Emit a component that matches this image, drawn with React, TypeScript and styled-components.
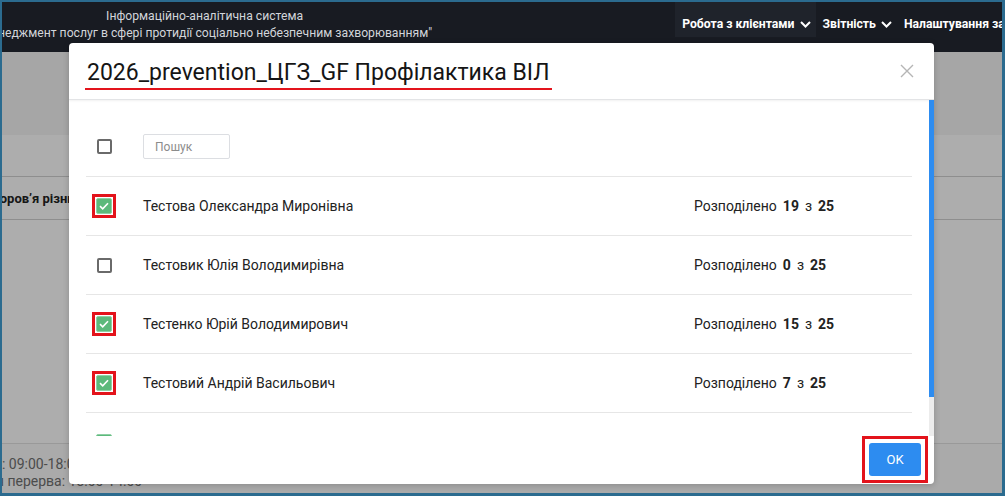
import * as React from 'react'
import styled, { createGlobalStyle, css } from 'styled-components'

const GlobalStyle = createGlobalStyle`
  html, body {
    margin: 0;
    padding: 0;
    background: #ffffff;
  }
  body {
    font-family: Roboto, 'Noto Sans', Arial, sans-serif;
  }
  * {
    box-sizing: border-box;
  }
`

type Specialist = {
  id: number
  name: string
  assigned: number
  total: number
  checked: boolean
  marked: boolean
}

const specialists: Specialist[] = [
  { id: 1, name: 'Тестова Олександра Миронівна', assigned: 19, total: 25, checked: true, marked: true },
  { id: 2, name: 'Тестовик Юлія Володимирівна', assigned: 0, total: 25, checked: false, marked: false },
  { id: 3, name: 'Тестенко Юрій Володимирович', assigned: 15, total: 25, checked: true, marked: true },
  { id: 4, name: 'Тестовий Андрій Васильович', assigned: 7, total: 25, checked: true, marked: true },
  { id: 5, name: 'Тестовський Петро Іванович', assigned: 3, total: 25, checked: true, marked: false },
]

const ChevronDown = () => (
  <svg width="11" height="7" viewBox="0 0 11 7" fill="none">
    <path d="M1 1l4.5 4.5L10 1" stroke="currentColor" strokeWidth="2" />
  </svg>
)

const CloseIcon = () => (
  <svg width="14" height="14" viewBox="0 0 14 14" fill="none">
    <path d="M1 1l12 12M13 1L1 13" stroke="currentColor" strokeWidth="1.4" />
  </svg>
)

const CheckMark = () => (
  <svg width="10" height="8" viewBox="0 0 10 8" fill="none">
    <path d="M1 4.2l2.7 2.6L9 1.2" stroke="#ffffff" strokeWidth="1.6" />
  </svg>
)

export default function App() {
  const [items, setItems] = React.useState(specialists)
  const [query, setQuery] = React.useState('')

  const toggle = (id: number) =>
    setItems((list) => list.map((it) => (it.id === id ? { ...it, checked: !it.checked } : it)))

  const renderBox = (it: Specialist) => {
    const box = (
      <Checkbox $checked={it.checked} onClick={() => toggle(it.id)}>
        {it.checked && <CheckMark />}
      </Checkbox>
    )
    return it.marked ? <Highlight>{box}</Highlight> : box
  }

  return (
    <Screen>
      <GlobalStyle />
      <TopBar>
        <Brand>
          <div>Інформаційно-аналітична система</div>
          <div>"Менеджмент послуг в сфері протидії соціально небезпечним захворюванням"</div>
        </Brand>
        <Nav>
          <NavItem $active>
            Робота з клієнтами <ChevronDown />
          </NavItem>
          <NavItem>
            Звітність <ChevronDown />
          </NavItem>
          <NavItem>
            Налаштування запитів <ChevronDown />
          </NavItem>
        </Nav>
      </TopBar>

      <Page>
        <FilterBand />
        <TableGap />
        <TableRow>
          <RowLabel>Охорона здоров’я різних груп населення</RowLabel>
        </TableRow>
        <PageFill />
        <PageFooter>
          <FooterLine>Графік: 09:00-18:00</FooterLine>
          <FooterLine>Обідня перерва: 13:00-14:00</FooterLine>
        </PageFooter>
        <Backdrop />
      </Page>

      <Modal>
        <ModalHeader>
          <ModalTitle>2026_prevention_ЦГЗ_GF Профілактика ВІЛ</ModalTitle>
          <CloseButton aria-label="close">
            <CloseIcon />
          </CloseButton>
        </ModalHeader>

        <ModalBody>
          <ListViewport>
            <ListHead>
              <CheckCell>
                <Checkbox $checked={false} />
              </CheckCell>
              <SearchInput
                placeholder="Пошук"
                value={query}
                onChange={(e) => setQuery(e.target.value)}
              />
            </ListHead>
            {items.map((it) => (
              <ListRow key={it.id}>
                <CheckCell>{renderBox(it)}</CheckCell>
                <Name>{it.name}</Name>
                <Quota>
                  <span>Розподілено</span>
                  <b>{it.assigned}</b>
                  <span>з</span>
                  <b>{it.total}</b>
                </Quota>
              </ListRow>
            ))}
          </ListViewport>
          <ScrollTrack>
            <ScrollThumb />
          </ScrollTrack>
        </ModalBody>

        <ModalFooter>
          <Highlight $wide>
            <OkButton>OK</OkButton>
          </Highlight>
        </ModalFooter>
      </Modal>
    </Screen>
  )
}

const Screen = styled.div`
  position: relative;
  width: 1005px;
  height: 496px;
  overflow: hidden;
  border-style: solid;
  border-color: #2b6b8f;
  border-width: 2px 3px 3px 2px;
  display: flex;
  flex-direction: column;
`

const TopBar = styled.header`
  display: flex;
  flex: 0 0 50px;
  background: #181b22;
  overflow: hidden;
  white-space: nowrap;
`

const Brand = styled.div`
  flex: 0 0 450px;
  margin-left: -25px;
  padding-top: 6px;
  text-align: center;
  color: #d2d5da;
  font-size: 12.2px;
  line-height: 17px;
`

const Nav = styled.nav`
  display: flex;
  margin-left: 243px;
  height: 35px;
`

const NavItem = styled.div<{ $active?: boolean }>`
  display: flex;
  align-items: flex-start;
  gap: 5px;
  padding: 14px 5px 0 7px;
  color: #ffffff;
  font-weight: 700;
  font-size: 12.2px;
  line-height: 16px;
  ${(p) =>
    p.$active &&
    css`
      background: #1f232b;
    `}

  & > svg {
    margin-top: 5px;
  }
`

const Page = styled.main`
  position: relative;
  flex: 1;
  display: flex;
  flex-direction: column;
  background: #ffffff;
`

const FilterBand = styled.div`
  flex: 0 0 83px;
  background: #f5f5f5;
`

const TableGap = styled.div`
  flex: 0 0 42px;
  border-bottom: 1px solid #d2d2d2;
`

const TableRow = styled.div`
  flex: 0 0 43px;
  display: flex;
  align-items: center;
  border-bottom: 1px solid #d2d2d2;
  overflow: hidden;
`

const RowLabel = styled.div`
  margin-left: -72px;
  white-space: nowrap;
  font-weight: 700;
  font-size: 13px;
  color: #222;
`

const PageFill = styled.div`
  flex: 1;
`

const PageFooter = styled.footer`
  flex: 0 0 50px;
  border-top: 1px solid #e2e2e2;
  background: #fbfbfb;
  padding-top: 12px;
  overflow: hidden;
`

const FooterLine = styled.div`
  margin-left: -43px;
  white-space: nowrap;
  font-size: 14px;
  line-height: 17px;
  color: #707070;
`

const Backdrop = styled.div`
  position: absolute;
  inset: 0;
  background: rgba(0, 0, 0, 0.32);
`

const Modal = styled.section`
  position: absolute;
  left: 67px;
  top: 41px;
  width: 865px;
  height: 441px;
  background: #ffffff;
  border-radius: 4px;
  box-shadow: 0 1px 6px rgba(0, 0, 0, 0.2);
  display: flex;
  flex-direction: column;
  overflow: hidden;
`

const ModalHeader = styled.div`
  flex: 0 0 57px;
  display: flex;
  align-items: center;
  padding: 0 20px 0 16px;
  border-bottom: 1px solid #e3e4e6;
  box-shadow: 0 1px 2px rgba(0, 0, 0, 0.06);
`

const ModalTitle = styled.h2`
  margin: 6px 0 0;
  padding: 0 2px 1px;
  font-size: 23px;
  font-weight: 400;
  line-height: 28px;
  color: #151515;
  border-bottom: 2px solid #e3141d;
`

const CloseButton = styled.button`
  margin-left: auto;
  border: 0;
  background: none;
  padding: 0;
  color: #b5b5b5;
  display: flex;
  cursor: pointer;
`

const ModalBody = styled.div`
  flex: 0 0 336px;
  display: flex;
  overflow: hidden;
`

const ListViewport = styled.div`
  flex: 1;
  overflow: hidden;
  padding: 17px 17px 0 17px;
`

const ScrollTrack = styled.div`
  flex: 0 0 5px;
  background: #ececec;
`

const ScrollThumb = styled.div`
  height: 297px;
  background: #2d8cf0;
`

const rowGrid = css`
  display: grid;
  grid-template-columns: 36px 1fr 218px;
  column-gap: 21px;
  align-items: center;
`

const ListHead = styled.div`
  ${rowGrid};
  height: 60px;
  border-bottom: 1px solid #e6e6e6;
`

const ListRow = styled.div`
  ${rowGrid};
  height: 59px;
  border-bottom: 1px solid #e6e6e6;
`

const CheckCell = styled.div`
  display: flex;
  justify-content: center;
  align-items: center;
`

const Checkbox = styled.span<{ $checked: boolean }>`
  display: inline-flex;
  align-items: center;
  justify-content: center;
  border-radius: 2px;
  cursor: pointer;
  ${(p) =>
    p.$checked
      ? css`
          width: 16px;
          height: 16px;
          background: #5cb97b;
          border: 1px solid #8fd0a5;
        `
      : css`
          width: 15px;
          height: 15px;
          background: #ffffff;
          border: 2px solid #6a6a6a;
        `}
`

const Highlight = styled.span<{ $wide?: boolean }>`
  display: inline-flex;
  border: 3px solid #e3131b;
  padding: ${(p) => (p.$wide ? '4px' : '1px')};
  background: #ffffff;
`

const SearchInput = styled.input`
  width: 87px;
  height: 25px;
  border: 1px solid #dcdee2;
  border-radius: 2px;
  padding: 0 11px;
  font-family: Roboto, sans-serif;
  font-size: 12px;
  color: #333;
  outline: none;

  &::placeholder {
    color: #8c8c8c;
  }
`

const Name = styled.div`
  font-size: 14px;
  color: #222;
`

const Quota = styled.div`
  display: flex;
  gap: 6px;
  font-size: 14px;
  color: #222;

  & b {
    font-weight: 700;
  }
`

const ModalFooter = styled.div`
  flex: 1;
  display: flex;
  justify-content: flex-end;
  align-items: flex-start;
  padding-right: 6px;
`

const OkButton = styled.button`
  width: 52px;
  height: 33px;
  border: 0;
  border-radius: 3px;
  background: #2d8cf0;
  color: #ffffff;
  font-family: Roboto, sans-serif;
  font-size: 13px;
  cursor: pointer;
`
